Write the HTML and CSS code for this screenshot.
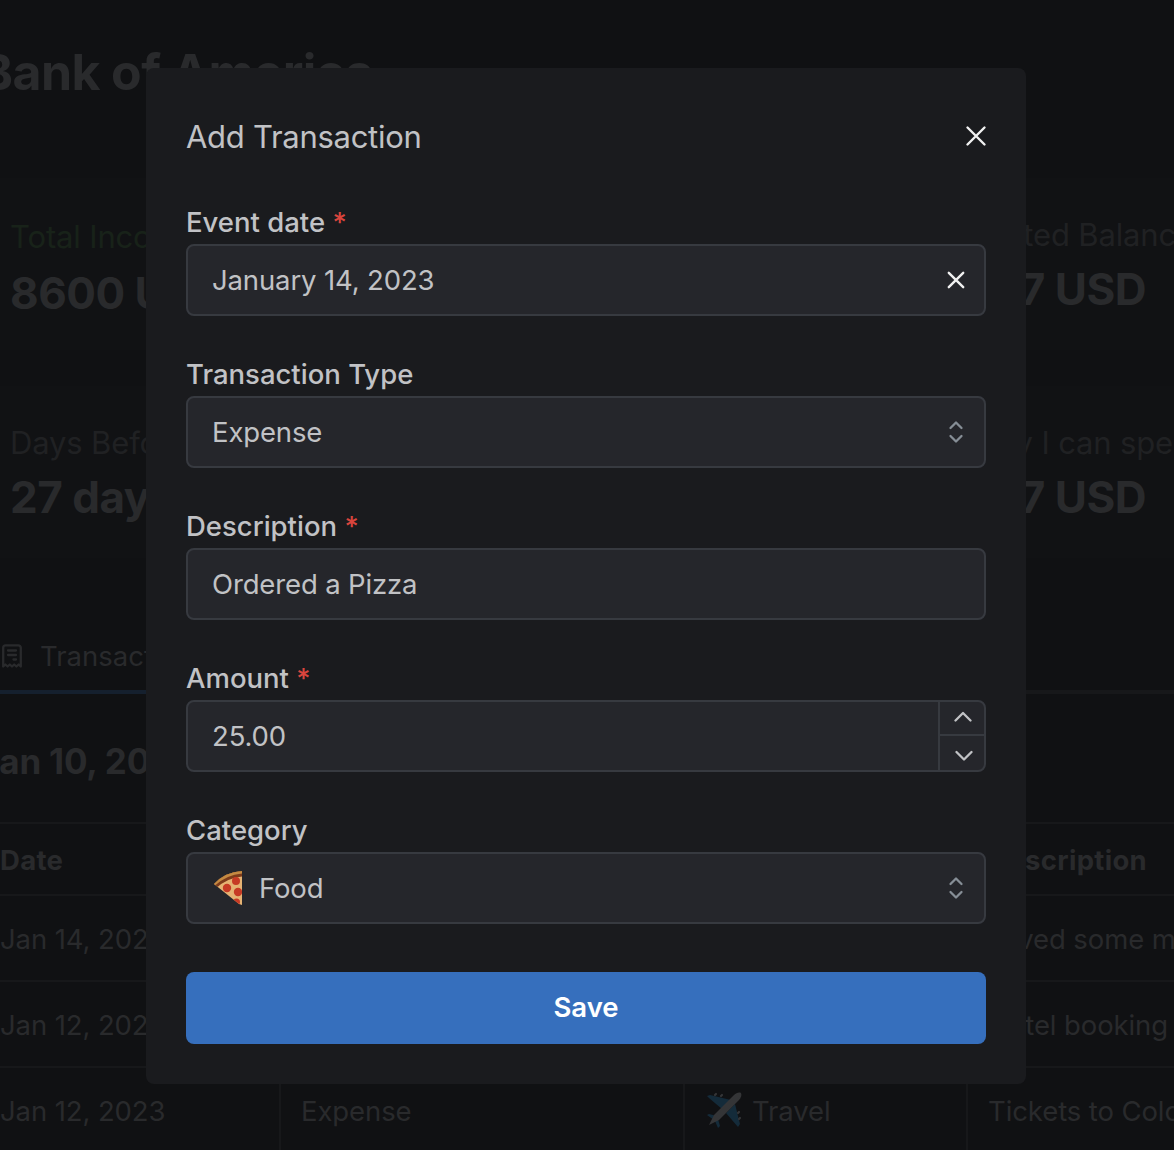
FILE: index.html
```html
<!DOCTYPE html>
<html lang="en">
<head>
<meta charset="utf-8">
<title>Bank of America</title>
<link rel="stylesheet" href="styles.css">
</head>
<body>
<main class="page">
  <h1 class="page-title">Bank of America</h1>
  <section class="stats">
    <div class="stat"><div class="stat-label stat-income">Total Income</div><div class="stat-value stat-low">8600 USD</div></div>
    <div class="stat stat-right"><div class="stat-label">Estimated Balance</div><div class="stat-value">7767 USD</div></div>
    <div class="stat"><div class="stat-label">Days Before</div><div class="stat-value">27 days</div></div>
    <div class="stat stat-right"><div class="stat-label spend">Money I can spend</div><div class="stat-value">7767 USD</div></div>
  </section>
  <nav class="tabs">
    <a class="tab">
      <svg class="tab-icon" viewBox="0 0 28 28" fill="none" stroke="currentColor" stroke-width="2.3" stroke-linecap="round" stroke-linejoin="round"><path d="M5.200 24.500V5.800a2.400 2.400 0 0 1 2.400-2.400h12.800a2.400 2.400 0 0 1 2.400 2.400v18.700l-2.200-2-2.200 2-2.200-2-2.200 2-2.200-2-2.200 2-2.200-2zM10 8.500h8M10 13h8M15.500 17.500h2.500"/></svg>
      Transactions
    </a>
  </nav>
  <h2 class="period">Jan 10, 2023</h2>
  <div class="table">
    <div class="row head"><div>Date</div><div></div><div></div><div class="end">Description</div></div>
    <div class="row"><div>Jan 14, 2023</div><div></div><div></div><div class="end saved">Saved some money</div></div>
    <div class="row"><div>Jan 12, 2023</div><div></div><div></div><div class="end">Hotel booking</div></div>
    <div class="row"><div>Jan 12, 2023</div><div>Expense</div>
      <div class="travel">
        <svg class="plane" viewBox="0 0 36 36"><path fill="#142b3a" d="M1 4l3-1 21 5-9 9L3 6zM29 12l5 20-2 3-12-14zM1 23l2-1 8 2-3 4zM12 27l2 7-2 2-3-7z"/><path fill="#343537" d="M3 33l5-10L28 3c2-2 5-3 7-2 1 2 0 5-2 7L13 28z"/><path stroke="#343537" stroke-width="2.200" stroke-linecap="round" d="M9 3l1-1M15 4l1-1M32 21l1-1M33 27l1-1"/></svg>
        Travel</div>
      <div>Tickets to Colorado</div></div>
  </div>
</main>

<div class="overlay">
  <form class="modal">
    <header class="modal-header">
      <span class="modal-title">Add Transaction</span>
      <svg class="close" viewBox="0 0 24 24"><path d="M3.500 3.500l17 17M20.500 3.500l-17 17"/></svg>
    </header>
    <div class="field">
      <label class="label">Event date <span class="required">*</span></label>
      <div class="input"><span class="value">January 14, 2023</span><svg class="clear" viewBox="0 0 20 20"><path d="M2.800 2.800l14.400 14.400M17.200 2.800L2.800 17.200"/></svg></div>
    </div>
    <div class="field">
      <label class="label">Transaction Type</label>
      <div class="input"><span class="value">Expense</span><svg class="selector" viewBox="0 0 16 24"><path d="M2.500 8L8 2.500 13.500 8M2.500 16L8 21.500 13.500 16"/></svg></div>
    </div>
    <div class="field">
      <label class="label">Description <span class="required">*</span></label>
      <div class="input"><span class="value">Ordered a Pizza</span></div>
    </div>
    <div class="field">
      <label class="label">Amount <span class="required">*</span></label>
      <div class="input number"><span class="value">25.00</span>
        <div class="steps">
          <div class="step"><svg class="chevron" viewBox="0 0 18 12"><path d="M1.500 9.500L9 2l7.500 7.500"/></svg></div>
          <div class="step"><svg class="chevron" viewBox="0 0 18 12"><path d="M1.500 2L9 9.500 16.500 2"/></svg></div>
        </div>
      </div>
    </div>
    <div class="field">
      <label class="label">Category</label>
      <div class="input">
        <svg class="pizza" viewBox="0 0 30 36">
          <defs><clipPath id="slice"><path d="M1 14Q12 2 29 1v34L26 34z"/></clipPath></defs>
          <g clip-path="url(#slice)"><path fill="#e5b273" d="M0 0h30v36H0z"/><path fill="none" stroke="#7d3b1b" stroke-width="9" d="M0 15Q13 3 30 2"/><path fill="none" stroke="#c48a42" stroke-width="5" d="M0 14Q13 2 30 1"/><g fill="#c63a25"><circle cx="23" cy="11" r="4"/><circle cx="14" cy="18" r="4.200"/><circle cx="25" cy="22" r="4.200"/><circle cx="23.500" cy="32" r="3.500"/></g></g>
        </svg>
        <span class="value">Food</span><svg class="selector" viewBox="0 0 16 24"><path d="M2.500 8L8 2.500 13.500 8M2.500 16L8 21.500 13.500 16"/></svg></div>
    </div>
    <button class="save" type="button">Save</button>
  </form>
</div>
</body>
</html>
```

FILE: styles.css
```css
* { box-sizing: border-box; }
body {
  margin: 0;
  height: 1150px;
  overflow: hidden;
  background: #101113;
  color: #292a2c;
  font: 27.500px/44px Inter, "Liberation Sans", sans-serif;
}
.page { width: 1174px; height: 1150px; overflow: hidden; }
.page-title {
  margin: 42px 0 76px -20px;
  font-size: 50px;
  line-height: 60px;
  font-weight: 700;
  letter-spacing: -.600px;
}
.stats {
  display: grid;
  grid-template-columns: 500px 1fr;
  row-gap: 36px;
}
.stat { height: 172px; padding: 32px 10px; background: #111214; white-space: nowrap; }
.stat-right { display: flex; flex-direction: column; align-items: flex-end; padding-right: 28px; }
.stat-right .stat-label { margin-right: -48px; }
.stat-right .spend { margin-right: -64px; }
.stat-label { height: 50px; font-size: 31px; line-height: 50px; letter-spacing: -.150px; color: #202123; }
.stat-income { color: #182219; padding-top: 2px; }
.stat-value { margin-top: -1px; font-size: 44px; line-height: 60px; font-weight: 700; letter-spacing: -.500px; }
.stat-low { padding-top: 4px; }
.tabs {
  display: flex;
  height: 76px;
  margin-top: 60px;
  border-bottom: 4px solid #17181a;
}
.tab {
  display: flex;
  align-items: center;
  gap: 14px;
  width: 260px;
  height: 76px;
  padding: 4px 0 0;
  border-bottom: 4px solid #15202e;
}
.tab-icon { width: 28px; height: 28px; margin-left: -2px; }
.period { margin: 37px 0 31px -21px; font-size: 35px; line-height: 60px; font-weight: 700; letter-spacing: -.200px; }
.table { width: 1400px; letter-spacing: -.100px; }
.row {
  display: grid;
  grid-template-columns: 281px 404px 283px 1fr;
  height: 86px;
  border-top: 2px solid #17181a;
  line-height: 86px;
}
.row > div { padding-left: 20px; border-right: 2px solid #17181a; white-space: nowrap; }
.row > div:first-child { padding-left: 0; }
.row > div:last-child { border-right: 0; }
.row.head { height: 72px; line-height: 73px; font-weight: 700; letter-spacing: .300px; }
.row > .travel { display: flex; align-items: center; gap: 10px; padding-left: 21px; }
.plane { width: 36px; height: 36px; margin-top: -3px; }
.row > .end { padding: 0 232px 0 0; text-align: right; }
.head > .end { padding-right: 253px; }
.row > .saved { padding-right: 161px; }

.overlay {
  position: absolute;
  inset: 0;
  display: flex;
  justify-content: center;
  align-items: flex-start;
  padding-top: 68px;
}
.modal {
  width: 880px;
  height: 1016px;
  margin-right: 2px;
  padding: 40px;
  border-radius: 8px;
  background: #1a1b1e;
  color: #c1c2c5;
}
.modal-header {
  display: flex;
  align-items: center;
  justify-content: space-between;
  height: 56px;
}
.modal-title { padding-top: 2px; font-size: 31px; letter-spacing: -.280px; }
.close, .clear, .selector, .chevron { fill: none; stroke-linecap: round; stroke-linejoin: round; }
.close { width: 24px; height: 24px; margin-right: -2px; stroke: #f1f1f1; stroke-width: 2.400; }
.field { height: 120px; margin-top: 32px; }
.label { display: block; height: 44px; padding-top: 4px; font-weight: 500; }
.required { color: #d9453d; }
.input {
  display: flex;
  align-items: center;
  height: 72px;
  margin-top: 4px;
  padding: 0 18px 0 24px;
  border: 2px solid #373a40;
  border-radius: 8px;
  background: #25262b;
}
.value { flex: 1; letter-spacing: -.140px; }
.clear { width: 20px; height: 20px; stroke: #f1f1f1; stroke-width: 2.400; }
.selector { width: 16px; height: 24px; margin-right: 2px; stroke: #868e96; stroke-width: 2.300; }
.input.number { padding-right: 0; }
.steps { width: 46px; height: 68px; border-left: 2px solid #373a40; }
.step { display: flex; align-items: center; justify-content: center; height: 32px; padding: 0 0 3px 1px; }
.step + .step { height: 36px; border-top: 2px solid #373a40; padding: 5px 0 0 3px; }
.chevron { width: 18px; height: 12px; stroke: #c1c2c5; stroke-width: 2.300; }
.pizza { width: 30px; height: 36px; margin: 0 15px 0 1px; }
.pizza + .value { padding-left: 1px; }
.save {
  display: block;
  width: 800px;
  height: 72px;
  margin: 48px 0 0;
  padding: 0 0 2px;
  border: 0;
  border-radius: 8px;
  background: #366fbd;
  color: #fff;
  font: 600 27.500px/70px Inter, "Liberation Sans", sans-serif;
}
```
